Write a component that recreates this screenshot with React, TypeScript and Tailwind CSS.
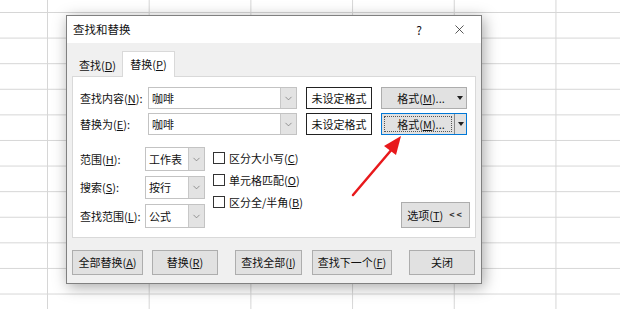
import { ChevronDown, X } from "lucide-react";

const font = { fontFamily: '"Noto Sans CJK SC", "Liberation Sans", sans-serif' };

function Combo({ value, w, h }: { value: string; w: string; h: string }) {
  return (
    <div className={`flex ${w} ${h} border border-[#c3c3c3] bg-white`}>
      <div className="flex flex-1 items-center px-[3px] text-[11px]">{value}</div>
      <div className="flex w-[16px] items-center justify-center border-l border-[#c8c8c8] bg-[#e3e3e3]">
        <ChevronDown size={11} strokeWidth={1.5} color="#6e6e6e" />
      </div>
    </div>
  );
}

function FormatButton({ focused }: { focused?: boolean }) {
  return (
    <div
      className={`flex h-[22px] w-[86px] items-stretch border bg-[#e1e1e1] ${
        focused ? "border-[#0078d7]" : "border-[#adadad]"
      }`}
    >
      <div className="flex flex-1 items-center p-[2px]">
        <div
          className={`flex h-full flex-1 items-center justify-center pl-[6px] text-[11px] ${
            focused ? "border border-dotted border-[#555]" : ""
          }`}
        >
          格式(<u>M</u>)...
        </div>
      </div>
      <div
        className={`flex w-[12px] items-center justify-center ${
          focused ? "border-l border-[#8a8a8a]" : ""
        }`}
      >
        <div className="h-0 w-0 border-x-[3.5px] border-t-[4px] border-x-transparent border-t-[#222]" />
      </div>
    </div>
  );
}

function Btn({ w, children }: { w: string; children: React.ReactNode }) {
  return (
    <div
      className={`flex h-[25px] ${w} items-center justify-center border border-[#adadad] bg-[#e1e1e1] text-[11px]`}
    >
      {children}
    </div>
  );
}

function Check({ children }: { children: React.ReactNode }) {
  return (
    <div className="flex h-[22px] items-center gap-[4px] text-[11px]">
      <div className="h-[12px] w-[12px] border border-[#333] bg-white" />
      <span>{children}</span>
    </div>
  );
}

export default function App() {
  return (
    <div
      className="relative h-[309px] w-[620px] overflow-hidden bg-white bg-[linear-gradient(#d6d6d6_1px,transparent_1px),linear-gradient(90deg,#d6d6d6_1px,transparent_1px)] bg-[length:101.7px_25.6px] bg-[position:47px_12px] text-[#111]"
      style={font}
    >
      <div className="absolute left-[66px] top-[15px] flex w-[416px] flex-col border border-[#808080] bg-[#f0f0f0] shadow-[2px_3px_14px_rgba(0,0,0,0.35)]">
        {/* title bar */}
        <div className="flex h-[27px] items-center bg-white pl-[6px] pr-[14px]">
          <span className="flex-1 text-[11.5px]">查找和替换</span>
          <span className="mr-[30px] text-[12px]">?</span>
          <X size={15} strokeWidth={1.2} color="#222" />
        </div>

        <div className="px-[5px] pb-[8px] pt-[8px]">
          {/* tabs */}
          <div className="flex h-[25px] items-end pl-[1px]">
            <div className="flex h-[22px] w-[49px] items-center justify-center text-[11px]">
              查找(<u>D</u>)
            </div>
            <div className="relative top-[1px] flex h-[26px] w-[53px] items-center justify-center border border-b-0 border-[#d9d9d9] bg-white text-[11px]">
              替换(<u>P</u>)
            </div>
          </div>

          {/* panel */}
          <div className="flex h-[162px] flex-col border border-[#d9d9d9] bg-white pl-[7px] pr-[4px] pt-[10px]">
            <div className="flex flex-col gap-[4px]">
              <div className="flex items-center">
                <div className="w-[68px] text-[11px]">
                  查找内容(<u>N</u>):
                </div>
                <Combo value="咖啡" w="w-[149px]" h="h-[22px]" />
                <div className="ml-[9px] flex h-[22px] w-[66px] items-center justify-center border-[1.5px] border-[#222] text-[11px]">
                  未设定格式
                </div>
                <div className="ml-[9px]">
                  <FormatButton />
                </div>
              </div>
              <div className="flex items-center">
                <div className="w-[68px] text-[11px]">
                  替换为(<u>E</u>):
                </div>
                <Combo value="咖啡" w="w-[149px]" h="h-[22px]" />
                <div className="ml-[9px] flex h-[22px] w-[66px] items-center justify-center border-[1.5px] border-[#222] text-[11px]">
                  未设定格式
                </div>
                <div className="ml-[9px]">
                  <FormatButton focused />
                </div>
              </div>
            </div>

            <div className="mt-[12px] flex">
              <div className="flex flex-col gap-[5px]">
                <div className="flex items-center">
                  <div className="w-[65px] text-[11px]">
                    范围(<u>H</u>):
                  </div>
                  <Combo value="工作表" w="w-[60px]" h="h-[24px]" />
                </div>
                <div className="flex items-center">
                  <div className="w-[65px] text-[11px]">
                    搜索(<u>S</u>):
                  </div>
                  <Combo value="按行" w="w-[60px]" h="h-[23px]" />
                </div>
                <div className="flex items-center">
                  <div className="w-[65px] text-[11px]">
                    查找范围(<u>L</u>):
                  </div>
                  <Combo value="公式" w="w-[60px]" h="h-[24px]" />
                </div>
              </div>

              <div className="ml-[8px] flex flex-col">
                <Check>
                  区分大小写(<u>C</u>)
                </Check>
                <Check>
                  单元格匹配(<u>O</u>)
                </Check>
                <Check>
                  区分全/半角(<u>B</u>)
                </Check>
              </div>

              <div className="flex flex-1 items-end justify-end pr-[1px]">
                <div className="flex h-[26px] w-[69px] items-center justify-center gap-[6px] border border-[#adadad] bg-[#e1e1e1] text-[11px]">
                  <span>
                    选项(<u>T</u>)
                  </span>
                  <span className="text-[9px] font-bold tracking-[2px] text-[#333]">&lt;&lt;</span>
                </div>
              </div>
            </div>
          </div>

          {/* bottom buttons */}
          <div className="mt-[12px] flex">
            <Btn w="w-[71px]">
              全部替换(<u>A</u>)
            </Btn>
            <div className="ml-[9px]">
              <Btn w="w-[66px]">
                替换(<u>R</u>)
              </Btn>
            </div>
            <div className="ml-[17px]">
              <Btn w="w-[67px]">
                查找全部(<u>I</u>)
              </Btn>
            </div>
            <div className="ml-[10px]">
              <Btn w="w-[80px]">
                查找下一个(<u>F</u>)
              </Btn>
            </div>
            <div className="ml-[17px]">
              <Btn w="w-[66px]">关闭</Btn>
            </div>
          </div>
        </div>
      </div>

      {/* red annotation arrow */}
      <svg className="absolute left-0 top-0" width="620" height="309">
        <line x1="353" y1="195" x2="393" y2="148" stroke="#e8191c" strokeWidth="2.5" strokeLinecap="round" />
        <polygon points="401,136 384,146 396,155" fill="#e8191c" />
      </svg>
    </div>
  );
}
